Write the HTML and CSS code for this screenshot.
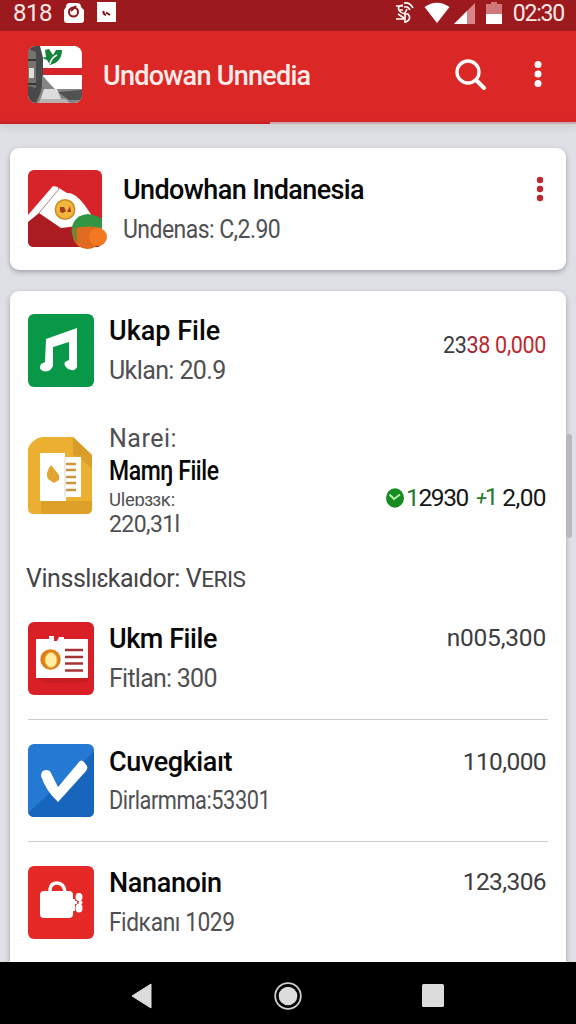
FILE: index.html
```html
<!DOCTYPE html>
<html lang="id">
<head>
<meta charset="utf-8">
<title>Undowan Unnedia</title>
<link rel="stylesheet" href="styles.css">
</head>
<body>
<div class="screen">
  <div class="statusbar">
    <span class="status-num">818</span>
    <svg class="st-lock" width="20" height="22" viewBox="0 0 20 22"><path d="M2 5Q2 1 6 1H13Q17 1 17 5L20 8V18Q20 21 17 21H3Q0 21 0 18V8Z" fill="#fff"/><circle cx="9.500" cy="10" r="4.500" fill="none" stroke="#8f1519" stroke-width="2"/><path d="M7 9 12 4" stroke="#8f1519" stroke-width="2"/></svg>
    <svg class="st-note" width="19" height="20" viewBox="0 0 19 20"><path d="M0 0H19V20H0Z" fill="#fff"/><path d="M6.500 9Q6 12.500 9 13M9 10.500 13 13" fill="none" stroke="#7a1518" stroke-width="2"/></svg>
    <svg class="st-sync" width="19" height="22" viewBox="0 0 19 22" fill="none" stroke="#fff" stroke-width="1.600"><path d="M1 4H8M3 8H8M1 17 9 17M8 3Q2 4 4 8T13 12Q17 17 11 20M9 1Q15 0 18 6M9 5Q13 4 15 8M12 7 10 11V21M3 12 9 16"/></svg>
    <svg class="st-wifi" width="26" height="22" viewBox="0 0 26 22"><path d="M.5 5Q13-3.5 25.5 5L13 21Z" fill="#fff"/></svg>
    <svg class="st-signal" width="21" height="22" viewBox="0 0 21 22"><path d="M0 22 21 1V22Z" fill="#d98587"/><path d="M0 22 13 9V22Z" fill="#fff"/></svg>
    <svg class="st-battery" width="16" height="22" viewBox="0 0 16 22"><path d="M0 2H5V0H11V2H16V22H0Z" fill="#cf7779"/><path d="M0 12H16V22H0Z" fill="#fff"/></svg>
    <span class="clock">02:30</span>
  </div>
  <header class="appbar">
    <svg class="app-logo" width="54" height="57" viewBox="0 0 54 57">
      <defs><clipPath id="logo-clip"><rect width="54" height="57" rx="8"/></clipPath></defs>
      <g clip-path="url(#logo-clip)">
        <path d="M0 0H54V57H0Z" fill="#fff"/>
        <path d="M13 22H54V29H13Z" fill="#d62229"/>
        <path d="M0 0H12L15 12V34L12 57H0Z" fill="#48494a"/>
        <path d="M0 3 8 6V42L0 40Z" fill="#77736e"/>
        <path d="M0 14H8M0 38H8" stroke="#35373a" stroke-width="2"/>
        <path d="M1 22H6V32H1Z" fill="#dedede"/>
        <path d="M14 29 22 38 27 43H54V57H8L14 43Z" fill="#858585"/>
        <path d="M16 43H29L34 55H12Z" fill="#dcdcdc"/>
        <path d="M30 46 54 44V54H41Z" fill="#505151"/>
        <path d="M10 57 13 53H38L42 57Z" fill="#b7b3b0"/>
        <path d="M17 4 21 3 25 9 28 4 34 4Q34 16 22 19L19 14 14 12 18 11Z" fill="#16823b"/>
        <path d="M22 18Q23 12 29 9" fill="none" stroke="#fff" stroke-width="1.600"/>
      </g>
    </svg>
    <h1 class="app-title">Undowan Unnedia</h1>
    <svg class="search" width="32" height="32" viewBox="0 0 32 32" fill="none" stroke="#fff" stroke-linecap="round"><circle cx="13" cy="13" r="11" stroke-width="3.300"/><path d="M21.500 21.500 29 29" stroke-width="4"/></svg>
    <svg class="menu" width="8" height="28" viewBox="0 0 8 28" fill="#fff"><circle cx="4" cy="4.500" r="3.500"/><circle cx="4" cy="14" r="3.500"/><circle cx="4" cy="23.500" r="3.500"/></svg>
  </header>
  <div class="progress"><div class="progress-fill"></div></div>

  <main class="content">
    <section class="card summary">
      <svg class="summary-icon" width="80" height="80" viewBox="0 0 80 80">
        <rect width="74" height="77" rx="6" fill="#d7232a"/>
        <path d="M0 51 12 42 34 58H74V71Q74 77 68 77H6Q0 77 0 71Z" fill="#ab1c22"/>
        <path d="M11 43 31 18 39 23Q49 22 62 43L66 50 48 56 33 58Z" fill="#fff"/>
        <path d="M0 45 25 16 30 17 30 20 11 43 0 52Z" fill="#fff"/>
        <path d="M31 19 11 43" stroke="#b58a92" stroke-width="1"/>
        <circle cx="37" cy="39.500" r="9.700" fill="#f0b63c" stroke="#c98b28" stroke-width="1.500"/>
        <path d="M32 37 36 37 38 41 35 43 32 42ZM39 42 42 36 43 42Z" fill="#a03a20"/>
        <path d="M44 57Q47 45 60 44L69 46 74 49V58L70 69H49Q42 66 44 57Z" fill="#329543"/>
        <path d="M47 58Q60 55 74 58V70Q68 79 59 79 48 78 45 68Z" fill="#e06b20"/>
        <path d="M44 58 49 58V74L45 68Z" fill="#77862e"/>
        <circle cx="70" cy="67" r="9" fill="#f37920"/>
      </svg>
      <div class="lines summary-lines">
        <div class="name"><span class="w-undowhan">Undowhan Indanesia</span></div>
        <div class="sub"><span class="narrow w-undenas">Undenas: C,2.90</span></div>
      </div>
      <svg class="card-menu" width="8" height="26" viewBox="0 0 8 26" fill="#be2730"><circle cx="4" cy="4" r="3.200"/><circle cx="4" cy="13" r="3.200"/><circle cx="4" cy="22" r="3.200"/></svg>
    </section>

    <section class="card list">
      <article class="row first">
        <svg class="icon" width="66" height="73" viewBox="0 0 66 73"><rect width="66" height="73" rx="6" fill="#089847"/><path d="M18 25 49 14V53Q47 58 40 55 35 51 37 48L41 46V28L25 33V52Q22 59 15 57 10 55 13 50L17 48Z" fill="#fff"/></svg>
        <div class="lines">
          <div class="name"><span>Ukap File</span></div>
          <div class="sub"><span class="w-uklan">Uklan: 20.9</span></div>
        </div>
        <div class="amount low"><span class="narrow a-first">23<b class="red">3</b><b class="red bright">8 0,000</b></span></div>
      </article>

      <article class="row detail">
        <svg class="icon" width="64" height="77" viewBox="0 0 64 77">
          <path d="M0 12Q1 6 10 1L15 0H45L64 18V71Q64 77 58 77H6Q0 77 0 71Z" fill="#ebb032"/>
          <path d="M45 0 64 18H45Z" fill="#d79d28"/><path d="M45 18H64V32L51 20Z" fill="#d9a12b"/>
          <path d="M13 64H64V71Q64 77 58 77H13Z" fill="#dda12a"/>
          <path d="M12 16H37V20H53V60H38V64H12Z" fill="#fff"/>
          <path d="M37 20V60" stroke="#ded3bd"/>
          <path d="M38 27H48M38 33H48M38 40H48M38 46H48M38 53H48" stroke="#c99640" stroke-width="2.500"/>
          <path d="M23 28 31 38V43L26 46 20 42Q17 36 23 28Z" fill="#e0a42f"/>
        </svg>
        <div class="lines detail-lines">
          <div class="label"><span class="w-narei">Narei:</span></div>
          <div class="name tight"><span class="narrow w-mamm">Mamŋ Fiile</span></div>
          <div class="tiny"><span class="w-ulepark">Uleɒɜɜĸ:</span></div>
          <div class="code"><span class="w-code">220,31l</span></div>
        </div>
        <div class="amount checked">
          <svg class="check" width="18" height="20" viewBox="0 0 18 20"><ellipse cx="9" cy="10" rx="9" ry="9.700" fill="#168b22"/><path d="M3.500 6.500 8 11 14 6.500" fill="none" stroke="#b8efaa" stroke-width="2"/></svg>
          <span class="a-main"><b class="green">1</b>2930</span><span class="a-plus"><i class="plus">+</i>1</span><span class="a-tail">2,00</span>
        </div>
      </article>

      <h2 class="section-title"><span class="w-section">Vinsslıɛkaıdor: V<small>ERIS</small></span></h2>

      <article class="row">
        <svg class="icon" width="66" height="73" viewBox="0 0 66 73">
          <rect width="66" height="73" rx="6" fill="#d92026"/>
          <path d="M8 56H60V60L18 61Z" fill="#c71c22"/>
          <path d="M8 17H21V14H26V19H29L31 15 36 15V17H60V56H8Z" fill="#fff"/>
          <circle cx="22.500" cy="37.500" r="10.200" fill="#df7e19"/><ellipse cx="23" cy="38" rx="6" ry="7.500" fill="#fff0a5" stroke="#efbd43"/>
          <path d="M37 28H55M37 35H55M37 41.500H55M37 48.500H55" stroke="#a63434" stroke-width="2.500"/>
        </svg>
        <div class="lines">
          <div class="name"><span class="w-ukm">Ukm Fiile</span></div>
          <div class="sub"><span class="w-fitlan">Fitlan: 300</span></div>
        </div>
        <div class="amount"><span class="a-third">n005,300</span></div>
      </article>

      <article class="row ruled">
        <svg class="icon" width="66" height="73" viewBox="0 0 66 73">
          <rect width="66" height="73" rx="6" fill="#2479d2"/>
          <path d="M66 8V67Q66 73 60 73H6Q2 73 0 69Z" fill="#1765bd"/>
          <path d="M13 32Q13 26 18 26 22 26 23 29L30 43 51 18Q53 15 56 18L59 22Q60 24 58 27L30 58Q18 47 13 32Z" fill="#fff"/>
        </svg>
        <div class="lines shifted">
          <div class="name"><span class="w-cuveg">Cuvegkiaıt</span></div>
          <div class="sub"><span class="narrow w-dirl">Dirlarmma:53301</span></div>
        </div>
        <div class="amount shifted"><span class="a-short">110,000</span></div>
      </article>

      <article class="row ruled">
        <svg class="icon" width="66" height="73" viewBox="0 0 66 73">
          <rect width="66" height="73" rx="6" fill="#e52926"/>
          <rect x="12" y="25" width="33" height="27" rx="4" fill="#fff"/>
          <path d="M22 26V23Q23 17 29 17 36 17 37 26" fill="none" stroke="#fff" stroke-width="3.500"/>
          <ellipse cx="51" cy="31" rx="3.500" ry="4" fill="#fff"/><ellipse cx="51" cy="42" rx="3.500" ry="4.500" fill="#fff"/><circle cx="52.500" cy="36.500" r="2" fill="#fff"/><path d="M44 33H47V35H49V38H47V45H44Z" fill="#fff"/>
        </svg>
        <div class="lines">
          <div class="name"><span class="w-nan">Nananoin</span></div>
          <div class="sub"><span class="narrow w-fid">Fidĸanı 1029</span></div>
        </div>
        <div class="amount"><span class="a-short">123,306</span></div>
      </article>
    </section>
    <div class="scroll-thumb"></div>
  </main>

  <nav class="navbar">
    <svg width="22" height="26" viewBox="0 0 22 26"><path d="M1 13 20 1V25Z" fill="#dcdcdc" stroke="#dcdcdc" stroke-linejoin="round"/></svg>
    <svg width="28" height="28" viewBox="0 0 28 28"><circle cx="14" cy="14" r="12.800" fill="none" stroke="#cfcfcf" stroke-width="1.800"/><circle cx="14" cy="14" r="9.300" fill="#dcdcdc"/></svg>
    <svg width="22" height="23" viewBox="0 0 22 23"><rect width="22" height="23" rx="1.500" fill="#dcdcdc"/></svg>
  </nav>
</div>
</body>
</html>
```
FILE: styles.css
```css
* { box-sizing: border-box; }
body { margin: 0; font-family: Roboto, "Liberation Sans", "DejaVu Sans", sans-serif; }
svg { display: block; flex: none; }
h1, h2 { margin: 0; font-weight: 400; }
b { font-weight: inherit; }
.screen { width: 576px; height: 1024px; display: flex; flex-direction: column; overflow: hidden; background: #dfe0e5; }

.statusbar { height: 31px; flex: none; display: flex; align-items: flex-start; padding: 2px 12px 0 13px; background: #9c1a1d; color: #ffe9e6; }
.status-num { width: 51px; font-size: 24px; line-height: 23px; letter-spacing: -0.5px; }
.st-note { margin-left: 13px; }
.st-sync { margin-left: 279px; }
.st-wifi { margin-left: 10px; }
.st-signal { margin-left: 4px; }
.st-battery { margin-left: 11px; }
.clock { margin-left: auto; font-size: 23px; line-height: 24px; letter-spacing: -1.2px; }

.appbar { height: 91px; flex: none; display: flex; align-items: flex-start; padding: 15px 34px 0 28px; background: #dc2727; color: #fff; }
.app-title { margin: 10px 0 0 21px; font-size: 27px; line-height: 40px; white-space: nowrap; color: #ffebe8; font-weight: 500; letter-spacing: -0.73px; }
.search { margin: 13px 0 0 auto; }
.menu { margin: 14px 0 0 47px; }
.progress { height: 2px; flex: none; background: #c9a9ad; box-shadow: 0 2px 7px rgba(60, 60, 70, .35); }
.progress-fill { width: 270px; height: 2px; background: #c92026; }

.content { flex: 1; min-height: 0; position: relative; padding: 24px 10px 0; display: flex; flex-direction: column; gap: 21px; }
.card { background: #fefefe; border-radius: 9px; box-shadow: 0 2px 5px rgba(60, 60, 70, .38); }
.summary { height: 122px; flex: none; display: flex; padding: 22px 22px 0 18px; }
.summary-lines { margin: 0 0 0 15px; }
.card-menu { margin: 6px 0 0 auto; }
.list { flex: 1; border-radius: 9px 9px 0 0; padding: 0 18px; }

.row { height: 122px; display: flex; padding-top: 24px; }
.row.first { height: 123px; padding-top: 23px; }
.row.ruled { box-shadow: 0 -1px 0 #cccccf; }
.lines { white-space: nowrap; color: #505053; }
.row .lines { margin: -3px 0 0 15px; }
.row .lines.shifted { margin-top: -2px; }
.row .detail-lines { margin: -15px 0 0 17px; }
.name { height: 40px; line-height: 40px; font-size: 27px; font-weight: 500; color: #080808; }
.sub { height: 39px; line-height: 39px; font-size: 25px; }
.shifted .sub { line-height: 37px; }
.amount { margin: -1px 2px 0 auto; height: 33px; line-height: 33px; font-size: 24.5px; white-space: nowrap; color: #3d3d40; }
.amount.low { margin-top: 14px; }
.amount.shifted { margin-top: 1px; }
.red { color: #9b2635; }
.red.bright { color: #bd2930; }
.green, .a-plus { color: #267b2c; }
.plus { font-size: 20px; }

.row.detail { height: 131px; padding-top: 23px; }
.label { height: 33px; line-height: 33px; font-size: 25px; }
.name.tight { height: 33px; line-height: 33px; }
.tiny { height: 24px; line-height: 24px; font-size: 18.5px; }
.code { height: 25px; line-height: 25px; font-size: 23px; }
.amount.checked { margin-top: 44px; display: flex; align-items: center; color: #171717; }
.check { margin-right: 2px; }
.a-plus { margin-left: 8px; }
.a-tail { margin-left: 6px; }
.section-title { height: 53px; padding-top: 14px; line-height: 40px; font-size: 25px; color: #454548; white-space: nowrap; }
.section-title small { font-size: 22.5px; }

.narrow { display: inline-block; transform-origin: left center; }
.amount .narrow { transform-origin: right center; }
.w-undowhan { letter-spacing: -0.6px; }
.w-undenas { letter-spacing: -0.6px; transform: scaleX(.92); }
.w-uklan { letter-spacing: -0.6px; }
.w-narei { letter-spacing: 0.5px; }
.w-mamm { letter-spacing: -0.5px; transform: scaleX(.852); }
.w-ulepark { letter-spacing: -0.3px; }
.w-code { letter-spacing: -0.6px; }
.w-section { margin-left: -2px; letter-spacing: -0.45px; }
.w-ukm { letter-spacing: -0.45px; }
.w-fitlan { letter-spacing: -0.75px; }
.w-cuveg { letter-spacing: -0.4px; }
.w-dirl { letter-spacing: -0.5px; transform: scaleX(.87); }
.w-nan { letter-spacing: -0.35px; }
.w-fid { letter-spacing: -0.5px; transform: scaleX(.91); }
.a-first { letter-spacing: -0.4px; transform: scaleX(.88); }
.a-main { letter-spacing: -1.4px; }
.a-plus { letter-spacing: -2.2px; }
.a-tail { letter-spacing: -0.6px; }
.a-third { letter-spacing: -0.2px; }
.a-short { letter-spacing: -0.6px; }
.scroll-thumb { position: absolute; right: 4px; top: 310px; width: 6px; height: 104px; border-radius: 3px; background: #b8b9bd; }
.navbar { height: 62px; flex: none; z-index: 1; display: flex; align-items: center; justify-content: space-between; padding: 5px 132px 0 131px; background: #000; }
```
